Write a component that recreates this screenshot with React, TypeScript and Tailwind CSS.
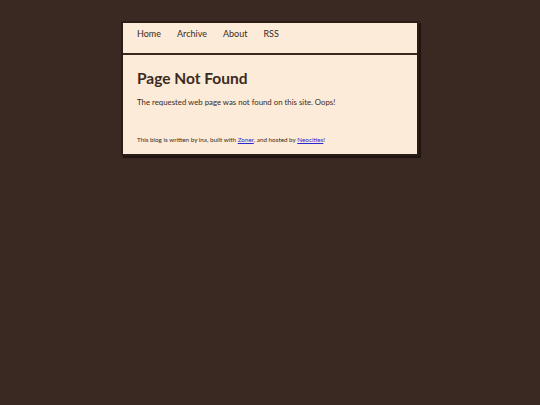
export default function App() {
  return (
    <div
      className="min-h-screen w-full bg-[#3a2923] pt-[21px] text-[#3a2a22]"
      style={{ fontFamily: '"Trebuchet MS", Lato, "Open Sans", sans-serif' }}
    >
      <div className="mx-auto w-[298px] border-2 border-[#2a1c16] bg-[#fcebd8] shadow-[2px_2px_0_#1f1410]">
        {/* Nav */}
        <nav className="flex h-[32px] items-start gap-4 border-b-2 border-[#3a2720] px-[14px] pt-[5px] text-[9px] leading-[12px]">
          <a className="text-[#3a2a22]">Home</a>
          <a className="text-[#3a2a22]">Archive</a>
          <a className="text-[#3a2a22]">About</a>
          <a className="text-[#3a2a22]">RSS</a>
        </nav>

        {/* Main */}
        <main className="px-[14px] pt-[14px] pb-[10px]">
          <h1 className="text-[15.5px] font-bold leading-[18px]">Page Not Found</h1>
          <p className="mt-[10px] text-[7.8px] leading-[10px]">
            The requested web page was not found on this site. Oops!
          </p>
          <footer className="mt-[29px] text-[6.3px] leading-[8px]">
            This blog is written by ina, built with{' '}
            <a className="text-[#2a2ad0] underline">Zoner</a>, and hosted by{' '}
            <a className="text-[#2a2ad0] underline">Neocities</a>!
          </footer>
        </main>
      </div>
    </div>
  )
}
